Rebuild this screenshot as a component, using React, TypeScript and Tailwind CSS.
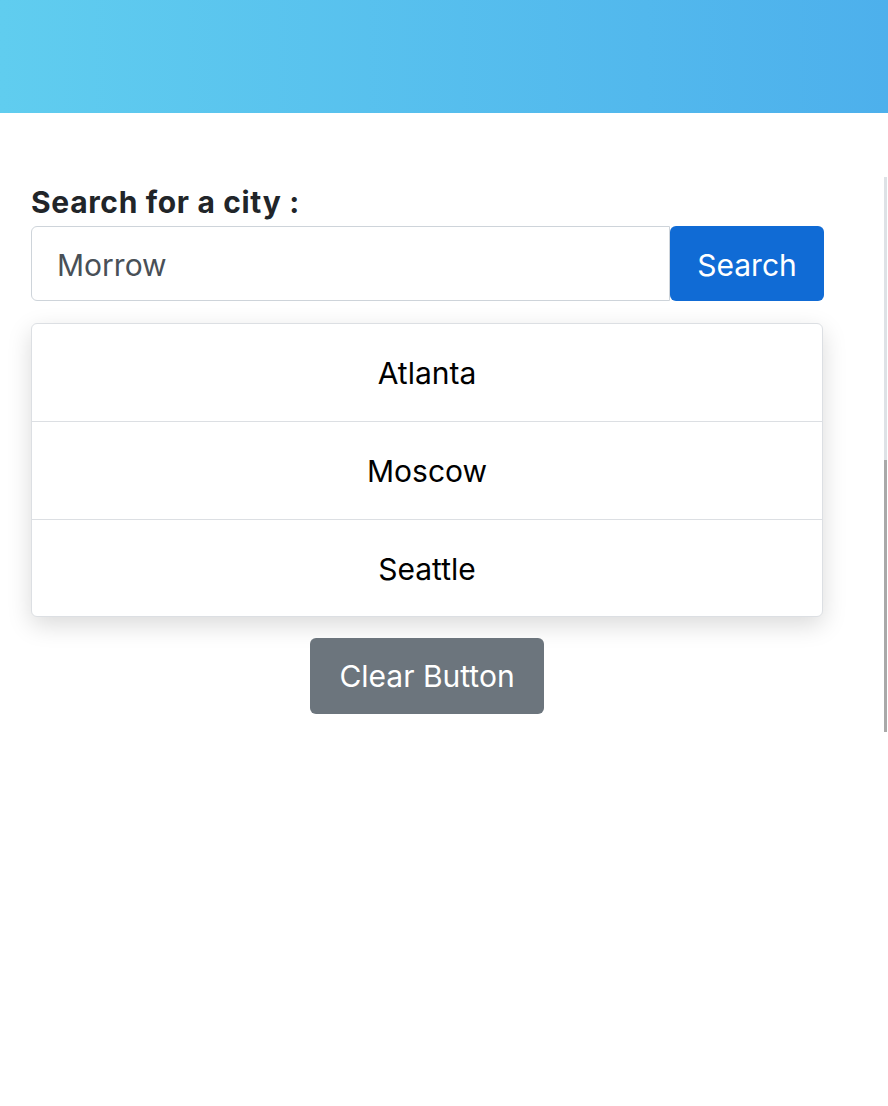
export default function App() {
  const cities = ["Atlanta", "Moscow", "Seattle"];
  return (
    <div className="min-h-[1106px] bg-white font-['Inter','Noto_Sans',sans-serif]">
      <div className="h-[113px] bg-gradient-to-r from-[#60cdef] to-[#4db0ec]" />
      <div className="flex justify-between">
        <div className="ml-[31px] mt-[64px] w-[793px]">
          <label className="block pt-[5px] text-[30px] font-bold leading-[40px] tracking-[0.022em] text-[#212529]">
            Search for a city :
          </label>
          <div className="mt-[4px] flex h-[75px]">
            <div className="flex flex-1 items-center rounded-l-[6px] border-[1.5px] border-[#ced4da] px-[25px] pt-[3px] text-[30px] text-[#495057]">
              Morrow
            </div>
            <button className="w-[154px] rounded-[6px] bg-[#106bd5] pt-[3px] text-[30px] text-white">
              Search
            </button>
          </div>
          <ul className="mt-[22px] mr-[1px] overflow-hidden rounded-[6px] border border-[#dcdfe3] bg-white shadow-[0_8px_24px_rgba(0,0,0,0.15)]">
            {cities.map((c, i) => (
              <li
                key={c}
                className={`flex items-center justify-center pt-[2px] text-[30px] text-black ${
                  i === 1 ? "h-[98px]" : "h-[97px]"
                } ${i > 0 ? "border-t border-[#dcdfe3]" : ""}`}
              >
                {c}
              </li>
            ))}
          </ul>
          <div className="mt-[21px] mr-[1px] flex justify-center">
            <button className="h-[76px] w-[234px] rounded-[6px] bg-[#6c757d] text-[30px] text-white">
              Clear Button
            </button>
          </div>
        </div>
        <div className="mt-[64px] mr-[1px] flex h-[555px] w-[3px] flex-col bg-[#dee2e6]">
          <div className="h-[283px]" />
          <div className="flex-1 bg-[#a9a9a9]" />
        </div>
      </div>
    </div>
  );
}
